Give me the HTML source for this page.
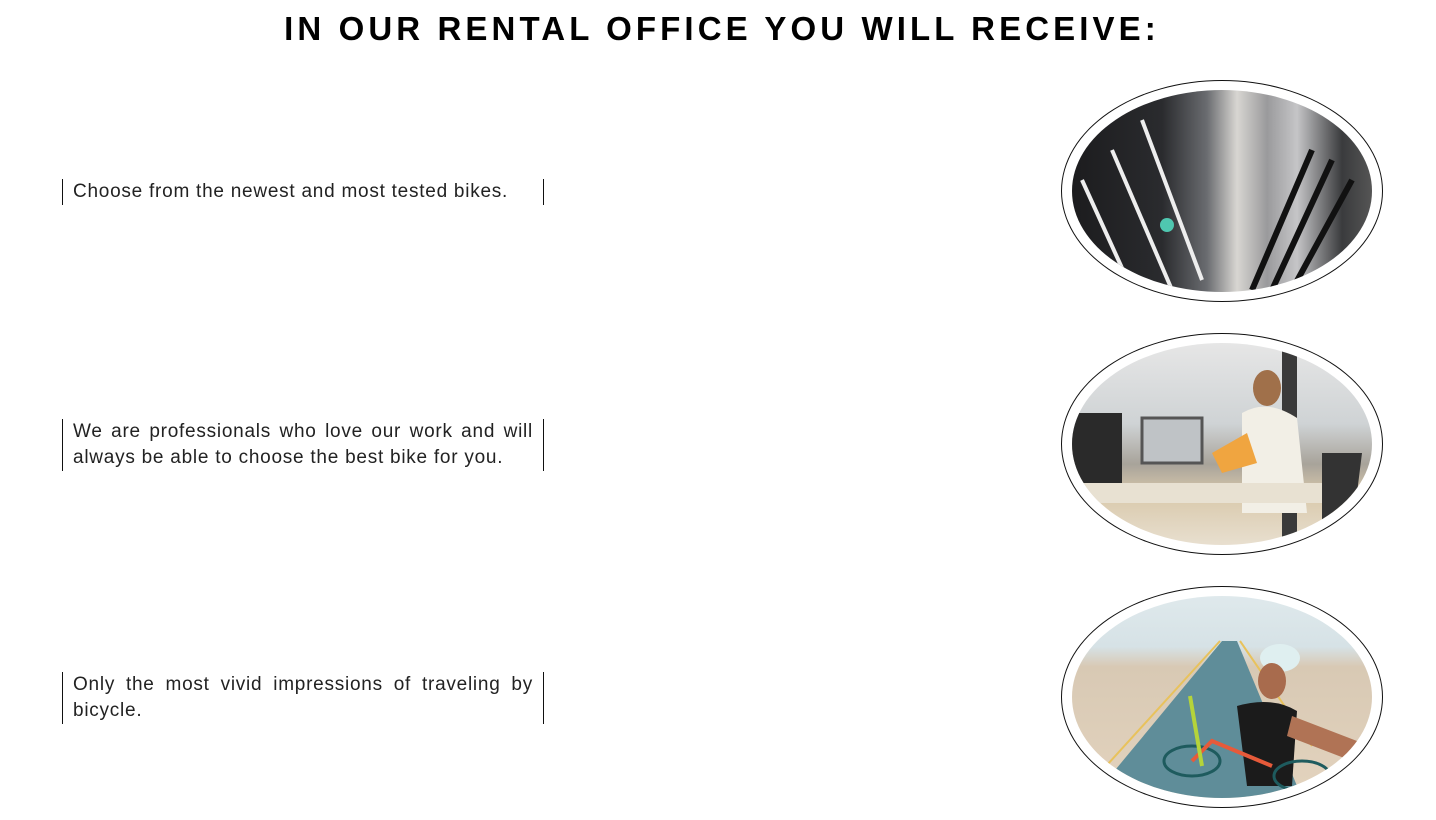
<!DOCTYPE html>
<html><head><meta charset="utf-8"><style>
*{margin:0;padding:0;box-sizing:border-box}
body{width:1436px;height:820px;background:#fff;position:relative;overflow:hidden;font-family:"Liberation Sans",sans-serif;color:#1a1a1a}
h1{position:absolute;top:10px;left:4px;width:1436px;text-align:center;font-size:33px;font-weight:bold;letter-spacing:4.1px;color:#000}
.t{position:absolute;left:62px;width:482px;border-left:1px solid #111;border-right:1px solid #111;padding:0 10px;font-size:19px;letter-spacing:0.75px;line-height:26px;text-align:justify;text-align-last:left;color:#222}
.o{position:absolute;left:1061px;width:322px;height:222px;border:1px solid #111;border-radius:50%}
.i{position:absolute;left:10px;top:9px;width:300px;height:202px;border-radius:50%;overflow:hidden}
</style></head><body>
<h1>IN OUR RENTAL OFFICE YOU WILL RECEIVE:</h1>
<div class="t" style="top:179px">Choose from the newest and most tested bikes.</div>
<div class="t" style="top:419px">We are professionals who love our work and will always be able to choose the best bike for you.</div>
<div class="t" style="top:672px">Only the most vivid impressions of traveling by bicycle.</div>

<div class="o" style="top:80px"><div class="i" style="background:linear-gradient(90deg,#1c1c1e 0%,#2a2b2e 30%,#6a6c70 45%,#d8d6d2 55%,#9a9a9c 65%,#c5c5c7 75%,#3a3b3d 90%,#555 100%)">
<svg width="300" height="202" viewBox="0 0 300 202"><g stroke="#eee" stroke-width="4" fill="none"><path d="M10 90 L60 200"/><path d="M40 60 L100 200"/><path d="M70 30 L130 190"/></g><g stroke="#111" stroke-width="6"><path d="M180 200 L240 60"/><path d="M200 200 L260 70"/><path d="M220 200 L280 90"/></g><circle cx="95" cy="135" r="7" fill="#4fc7b0"/></svg></div></div>

<div class="o" style="top:333px"><div class="i" style="background:linear-gradient(180deg,#e6e6e6 0%,#cfd3d5 40%,#a8a39a 60%,#d9c9ac 75%,#e8dfcf 100%)">
<svg width="300" height="202" viewBox="0 0 300 202"><rect x="0" y="70" width="50" height="70" fill="#2a2a2a"/><rect x="70" y="75" width="60" height="45" fill="#bfc3c6" stroke="#555" stroke-width="3"/><rect x="210" y="0" width="15" height="202" fill="#3a3a3a"/><ellipse cx="195" cy="45" rx="14" ry="18" fill="#a0704a"/><path d="M170 70 Q195 55 225 75 L235 170 L170 170Z" fill="#f2efe6"/><path d="M140 110 L175 90 L185 120 L150 130Z" fill="#f0a540"/><rect x="0" y="140" width="260" height="20" fill="#e8e1d2"/><path d="M250 110 L290 110 L280 190 L250 190Z" fill="#333"/></svg></div></div>

<div class="o" style="top:586px"><div class="i" style="background:linear-gradient(180deg,#dfe9ec 0%,#d6e2e6 25%,#d8c9b4 35%,#e3d3be 100%)">
<svg width="300" height="202" viewBox="0 0 300 202"><path d="M150 45 L20 202 L230 202 L165 45Z" fill="#5f8d99"/><path d="M148 45 L25 180" stroke="#e8c25c" stroke-width="2"/><path d="M168 45 L240 150" stroke="#e8c25c" stroke-width="2"/><ellipse cx="208" cy="62" rx="20" ry="14" fill="#dfeff0"/><ellipse cx="200" cy="85" rx="14" ry="18" fill="#a86b4d"/><path d="M165 110 Q200 100 225 115 L220 190 L175 190Z" fill="#1b1b1b"/><path d="M220 120 L285 145 L280 165 L215 140Z" fill="#b07355"/><ellipse cx="120" cy="165" rx="28" ry="15" fill="none" stroke="#1e5b5e" stroke-width="3"/><ellipse cx="230" cy="180" rx="28" ry="15" fill="none" stroke="#1e5b5e" stroke-width="3"/><path d="M120 165 L140 145 L200 170" stroke="#e65a3a" stroke-width="4" fill="none"/><path d="M118 100 L130 170" stroke="#b5d43a" stroke-width="4"/></svg></div></div>
</body></html>
